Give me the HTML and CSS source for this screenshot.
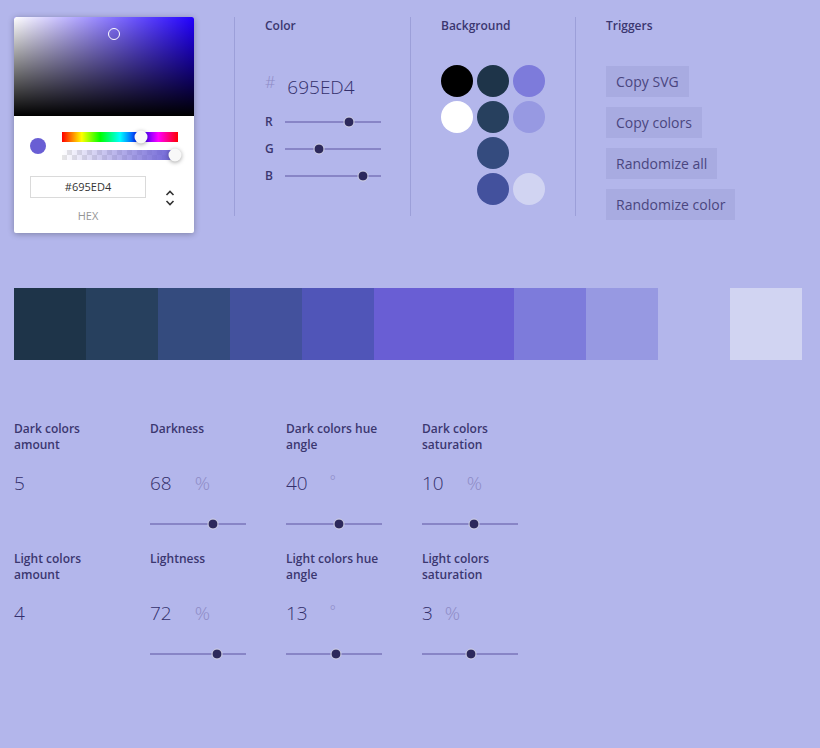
FILE: index.html
```html
<!DOCTYPE html>
<html lang="en">
<head>
    <meta charset="UTF-8">
    <title>Palette Generator</title>
    <link rel="stylesheet" href="styles.css">
</head>
<body>
    <div class="top">
        <div class="picker">
            <div class="saturation">
                <div class="sat-cursor"></div>
            </div>
            <div class="picker-body">
                <div class="picker-row">
                    <div class="preview"></div>
                    <div class="bars">
                        <div class="hue-bar"><div class="bar-thumb" style="left: 68%"></div></div>
                        <div class="alpha-bar"><div class="bar-thumb" style="left: 97%"></div></div>
                    </div>
                </div>
                <div class="hex-row">
                    <div class="hex-field">
                        <div class="hex-input">#695ED4</div>
                        <div class="hex-label">HEX</div>
                    </div>
                    <div class="toggle">
                        <svg width="10" height="18" viewBox="0 0 10 18"><path d="M1.5 6 L5 2.5 L8.5 6" fill="none" stroke="#333" stroke-width="1.6"/><path d="M1.5 12 L5 15.5 L8.5 12" fill="none" stroke="#333" stroke-width="1.6"/></svg>
                    </div>
                </div>
            </div>
        </div>

        <div class="section section-color">
            <h3>Color</h3>
            <div class="hex-big"><span class="hash">#</span>695ED4</div>
            <div class="rgb-row"><span>R</span><div class="slider"><div class="thumb" style="left: 67%"></div></div></div>
            <div class="rgb-row"><span>G</span><div class="slider"><div class="thumb" style="left: 35%"></div></div></div>
            <div class="rgb-row"><span>B</span><div class="slider"><div class="thumb" style="left: 81%"></div></div></div>
        </div>

        <div class="section section-bg">
            <h3>Background</h3>
            <div class="dots">
                <div class="dot" style="background: #000000"></div>
                <div class="dot" style="background: #1e3449"></div>
                <div class="dot" style="background: #7d7bdb"></div>
                <div class="dot" style="background: #ffffff"></div>
                <div class="dot" style="background: #27405e"></div>
                <div class="dot" style="background: #9799e2"></div>
                <div class="dot empty"></div>
                <div class="dot" style="background: #344b7e"></div>
                <div class="dot empty"></div>
                <div class="dot empty"></div>
                <div class="dot" style="background: #43519d"></div>
                <div class="dot" style="background: #d1d4f2"></div>
            </div>
        </div>

        <div class="section section-triggers">
            <h3>Triggers</h3>
            <div class="buttons">
                <button>Copy SVG</button>
                <button>Copy colors</button>
                <button>Randomize all</button>
                <button>Randomize color</button>
            </div>
        </div>
    </div>

    <div class="swatches">
        <div class="swatch" style="background: #1e3449"></div>
        <div class="swatch" style="background: #27405e"></div>
        <div class="swatch" style="background: #344b7e"></div>
        <div class="swatch" style="background: #43519d"></div>
        <div class="swatch" style="background: #5055b8"></div>
        <div class="swatch main" style="background: #695ed4"></div>
        <div class="swatch" style="background: #7d7bdb"></div>
        <div class="swatch" style="background: #9799e2"></div>
        <div class="swatch" style="background: #b3b6eb"></div>
        <div class="swatch" style="background: #d1d4f2"></div>
    </div>

    <div class="controls">
        <div class="control">
            <label>Dark colors amount</label>
            <div class="value">5</div>
        </div>
        <div class="control">
            <label>Darkness</label>
            <div class="value">68<span class="unit">%</span></div>
            <div class="slider"><div class="thumb" style="left: 66%"></div></div>
        </div>
        <div class="control">
            <label>Dark colors hue angle</label>
            <div class="value">40<span class="unit deg">°</span></div>
            <div class="slider"><div class="thumb" style="left: 55%"></div></div>
        </div>
        <div class="control">
            <label>Dark colors saturation</label>
            <div class="value">10<span class="unit">%</span></div>
            <div class="slider"><div class="thumb" style="left: 54%"></div></div>
        </div>

        <div class="control">
            <label>Light colors amount</label>
            <div class="value">4</div>
        </div>
        <div class="control">
            <label>Lightness</label>
            <div class="value">72<span class="unit">%</span></div>
            <div class="slider"><div class="thumb" style="left: 70%"></div></div>
        </div>
        <div class="control">
            <label>Light colors hue angle</label>
            <div class="value">13<span class="unit deg">°</span></div>
            <div class="slider"><div class="thumb" style="left: 52%"></div></div>
        </div>
        <div class="control">
            <label>Light colors saturation</label>
            <div class="value">3<span class="unit narrow">%</span></div>
            <div class="slider"><div class="thumb" style="left: 51%"></div></div>
        </div>
    </div>
</body>
</html>
```

FILE: styles.css
```css
body {
    font-family: 'Open Sans', 'Noto Sans', sans-serif;
    background-color: #b3b6eb;
    color: #3b3770;
    margin: 0;
    padding: 17px 14px 0 14px;
}

/* top area */

.top {
    display: flex;
    align-items: flex-start;
}

.picker {
    width: 180px;
    background: #ffffff;
    border-radius: 2px;
    box-shadow: 0 1px 6px rgba(0, 0, 0, 0.3);
    overflow: hidden;
    margin-right: 40px;
}

.saturation {
    position: relative;
    height: 99px;
    background:
        linear-gradient(to bottom, rgba(0, 0, 0, 0), #000000),
        linear-gradient(to right, #ffffff, rgba(255, 255, 255, 0)),
        #2200ff;
}

.sat-cursor {
    position: absolute;
    left: 94px;
    top: 11px;
    width: 10px;
    height: 10px;
    border: 1.5px solid #ffffff;
    border-radius: 50%;
}

.picker-body {
    padding: 16px 16px 10px 16px;
}

.picker-row {
    display: flex;
    align-items: center;
}

.preview {
    width: 16px;
    height: 16px;
    border-radius: 50%;
    background: #695ed4;
    margin-right: 16px;
}

.bars {
    flex: 1;
}

.hue-bar,
.alpha-bar {
    position: relative;
    height: 10px;
}

.hue-bar {
    background: linear-gradient(to right, #ff0000, #ffff00 17%, #00ff00 33%, #00ffff 50%, #0000ff 67%, #ff00ff 83%, #ff0000);
    margin-bottom: 8px;
}

.alpha-bar {
    background:
        linear-gradient(to right, rgba(105, 94, 212, 0), #695ed4),
        repeating-conic-gradient(#e6e6e6 0 25%, #ffffff 0 50%) 0 0 / 10px 10px;
}

.bar-thumb {
    position: absolute;
    top: 50%;
    width: 13px;
    height: 13px;
    border-radius: 50%;
    background: #f8f8f8;
    box-shadow: 0 1px 4px rgba(0, 0, 0, 0.37);
    transform: translate(-50%, -50%);
}

.hex-row {
    display: flex;
    align-items: flex-start;
    margin-top: 16px;
}

.hex-field {
    width: 116px;
}

.hex-input {
    height: 20px;
    line-height: 20px;
    border: 1px solid #dadada;
    font-size: 11px;
    color: #333333;
    text-align: center;
}

.hex-label {
    margin-top: 10px;
    font-size: 11px;
    color: #969696;
    text-align: center;
}

.toggle {
    margin: 13px 0 0 19px;
}

.section {
    border-left: 1px solid #9c9fd9;
    padding: 1px 0 0 30px;
    height: 198px;
}

.section h3 {
    margin: 0;
    font-size: 12px;
    font-weight: 600;
    line-height: 16px;
}

.section-color {
    width: 145px;
}

.section-bg {
    width: 134px;
}

.hex-big {
    margin-top: 37px;
    font-size: 19px;
    font-weight: 300;
    color: #34306b;
    height: 37px;
}

.hash {
    font-size: 16px;
    color: #8d8ac5;
    margin-right: 12px;
    vertical-align: 6px;
}

.rgb-row {
    display: flex;
    align-items: center;
    height: 27px;
    font-size: 12px;
    font-weight: 600;
}

.rgb-row span {
    width: 20px;
}

.rgb-row .slider {
    width: 96px;
}

.dots {
    display: grid;
    grid-template-columns: repeat(3, 32px);
    gap: 4px;
    margin-top: 31px;
}

.dot {
    width: 32px;
    height: 32px;
    border-radius: 50%;
}

.dot.empty {
    background: transparent;
}

.buttons {
    display: flex;
    flex-direction: column;
    align-items: flex-start;
    gap: 10px;
    margin-top: 32px;
}

button {
    font-family: 'Open Sans', 'Noto Sans', sans-serif;
    font-size: 14px;
    color: #4a467f;
    background: #a8abe1;
    border: none;
    height: 31px;
    padding: 0 10px;
    cursor: pointer;
}

/* sliders */

.slider {
    position: relative;
    height: 2px;
    background: #8885c6;
}

.thumb {
    position: absolute;
    top: 50%;
    width: 9px;
    height: 9px;
    border-radius: 50%;
    background: #2d295c;
    border: 1px solid #d6d6ea;
    transform: translate(-50%, -50%);
}

/* palette */

.swatches {
    display: flex;
    margin-top: 55px;
    height: 72px;
}

.swatch {
    width: 72px;
}

.swatch.main {
    width: 140px;
}

/* controls */

.controls {
    display: grid;
    grid-template-columns: repeat(4, 136px);
    grid-auto-rows: 130px;
    margin-top: 61px;
}

.control label {
    display: block;
    width: 100px;
    font-size: 12px;
    font-weight: 600;
    line-height: 16px;
    height: 32px;
}

.control .value {
    margin-top: 17px;
    font-size: 19px;
    font-weight: 300;
    color: #34306b;
    height: 24px;
}

.unit {
    color: #8d8ac5;
    margin-left: 23px;
}

.unit.deg {
    font-size: 14px;
    vertical-align: 4px;
    margin-left: 22px;
}

.unit.narrow {
    margin-left: 12px;
}

.control .slider {
    width: 96px;
    margin-top: 29px;
}
```
